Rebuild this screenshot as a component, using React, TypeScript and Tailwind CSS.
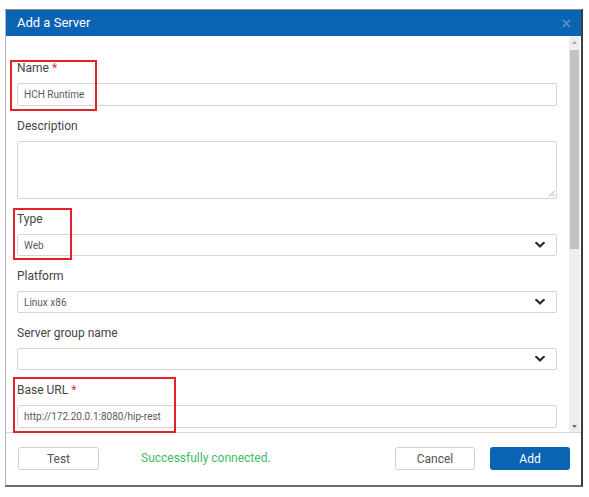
import React from "react";

function Chevron() {
  return (
    <svg width="10" height="7" viewBox="0 0 10 7" className="absolute right-[11px] top-1/2 -translate-y-1/2">
      <path d="M1.2 1.3 L5 5 L8.8 1.3" fill="none" stroke="#2b2b2b" strokeWidth="2.2" strokeLinecap="round" strokeLinejoin="round" />
    </svg>
  );
}

function Label({ text, required }: { text: string; required?: boolean }) {
  return (
    <div className="h-[16px] leading-[16px] text-[12px] text-[#454545]">
      {text}
      {required && <span className="text-[#e0303a]"> *</span>}
    </div>
  );
}

function TextInput({ value }: { value?: string }) {
  return (
    <div className="mt-[7px] h-[23px] border border-[#d6d6d6] rounded-[2px] flex items-center pl-[6px] text-[10px] text-[#5a5a5a]">
      {value}
    </div>
  );
}

function Select({ value }: { value?: string }) {
  return (
    <div className="relative mt-[7px] h-[22px] border border-[#d6d6d6] rounded-[2px] flex items-center pl-[6px] text-[10px] text-[#5a5a5a]">
      {value}
      <Chevron />
    </div>
  );
}

export default function App() {
  return (
    <div className="relative w-[589px] h-[497px] bg-white overflow-hidden pt-[9px] pl-[5px] font-['Roboto',sans-serif]">
      <div className="w-[578px] flex flex-col border-t border-t-[#8c8c8c] border-l border-l-[#b4b4b4] border-r-2 border-r-[#3c3c3c] border-b-2 border-b-[#6a6a6a]">
        {/* header */}
        <div className="h-[26px] bg-[#0a63b3] flex items-center justify-between pl-[11px] pr-[10px]">
          <span className="text-[13px] text-white">Add a Server</span>
          <svg width="9" height="9" viewBox="0 0 9 9">
            <path d="M1 1 L8 8 M8 1 L1 8" stroke="#5f93c8" strokeWidth="1.6" />
          </svg>
        </div>
        {/* body */}
        <div className="h-[396px] flex">
          <div className="flex-1 overflow-hidden pl-[11px] pr-[12px] pt-[24px]">
            <div>
              <Label text="Name" required />
              <TextInput value="HCH Runtime" />
            </div>
            <div className="mt-[12px]">
              <Label text="Description" />
              <div className="relative mt-[7px] h-[58px] border border-[#d6d6d6] rounded-[2px]">
                <svg width="7" height="7" viewBox="0 0 7 7" className="absolute right-[1px] bottom-[1px]">
                  <path d="M6.5 1 L1 6.5 M6.5 4 L4 6.5" stroke="#9a9a9a" strokeWidth="0.9" />
                </svg>
              </div>
            </div>
            <div className="mt-[12px]">
              <Label text="Type" />
              <Select value="Web" />
            </div>
            <div className="mt-[12px]">
              <Label text="Platform" />
              <Select value="Linux x86" />
            </div>
            <div className="mt-[12px]">
              <Label text="Server group name" />
              <Select />
            </div>
            <div className="mt-[12px]">
              <Label text="Base URL" required />
              <TextInput value="http://172.20.0.1:8080/hip-rest" />
            </div>
          </div>
          {/* scrollbar */}
          <div className="w-[12px] pr-[1px] flex">
            <div className="w-[11px] bg-[#eeeeee] flex flex-col items-center">
              <div className="h-[12px] flex items-center justify-center">
                <svg width="5" height="3" viewBox="0 0 5 3">
                  <path d="M0 3 L2.5 0 L5 3 Z" fill="#a6a6a6" />
                </svg>
              </div>
              <div className="w-[9px] h-[199px] mt-[2px] bg-[#c3c3c3]" />
              <div className="flex-1" />
              <div className="h-[12px] flex items-center justify-center">
                <svg width="5" height="3" viewBox="0 0 5 3">
                  <path d="M0 0 L2.5 3 L5 0 Z" fill="#6a6a6a" />
                </svg>
              </div>
            </div>
          </div>
        </div>
        {/* footer */}
        <div className="h-[53px] border-t border-t-[#d4d4d4] flex items-start pt-[14px] pl-[12px] pr-[11px]">
          <button className="w-[81px] h-[23px] border border-[#cfcfcf] rounded-[3px] text-[12px] text-[#555] bg-white">
            Test
          </button>
          <span className="ml-[42px] h-[23px] leading-[23px] text-[12px] text-[#3fba6b]">Successfully connected.</span>
          <div className="flex-1" />
          <button className="w-[80px] h-[23px] border border-[#cfcfcf] rounded-[3px] text-[12px] text-[#555] bg-white">
            Cancel
          </button>
          <button className="ml-[15px] w-[80px] h-[23px] rounded-[3px] text-[12px] text-white bg-[#0a63b3]">
            Add
          </button>
        </div>
      </div>
      {/* annotation boxes */}
      <div className="absolute left-[10px] top-[60px] w-[87px] h-[51px] border-2 border-[#e4212c]" />
      <div className="absolute left-[13px] top-[208px] w-[59px] h-[52px] border-2 border-[#e4212c]" />
      <div className="absolute left-[13px] top-[377px] w-[163px] h-[56px] border-2 border-[#e4212c]" />
    </div>
  );
}
